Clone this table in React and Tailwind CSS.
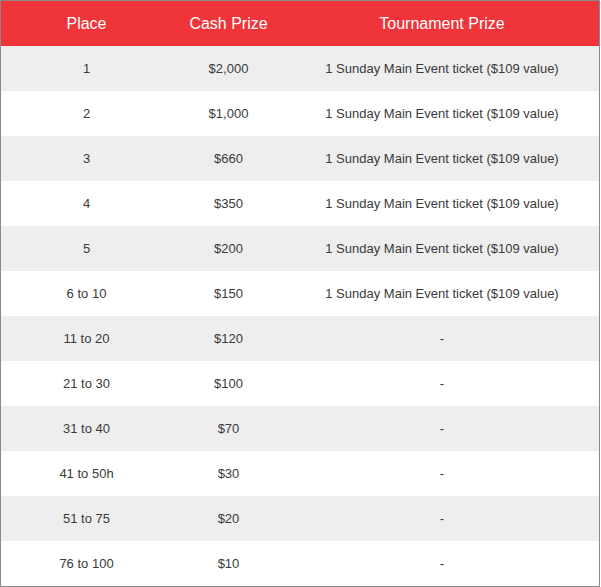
const rows = [
  ['1', '$2,000', '1 Sunday Main Event ticket ($109 value)'],
  ['2', '$1,000', '1 Sunday Main Event ticket ($109 value)'],
  ['3', '$660', '1 Sunday Main Event ticket ($109 value)'],
  ['4', '$350', '1 Sunday Main Event ticket ($109 value)'],
  ['5', '$200', '1 Sunday Main Event ticket ($109 value)'],
  ['6 to 10', '$150', '1 Sunday Main Event ticket ($109 value)'],
  ['11 to 20', '$120', '-'],
  ['21 to 30', '$100', '-'],
  ['31 to 40', '$70', '-'],
  ['41 to 50h', '$30', '-'],
  ['51 to 75', '$20', '-'],
  ['76 to 100', '$10', '-'],
];

export default function App() {
  return (
    <div className="w-[600px] bg-white font-['Liberation_Sans',Arial,sans-serif]">
      <div className="border border-[#8a8a8a]">
        <div className="grid grid-cols-[171px_113px_1fr] h-[45px] items-center bg-[#ef3539] text-white text-[16px]">
          <div className="text-center">Place</div>
          <div className="text-center">Cash Prize</div>
          <div className="text-center">Tournament Prize</div>
        </div>
        {rows.map((r, i) => (
          <div
            key={i}
            className={`grid grid-cols-[171px_113px_1fr] h-[45px] items-center text-[13px] text-[#3a3a3a] ${
              i % 2 === 0 ? 'bg-[#eeeeee]' : 'bg-white'
            }`}
          >
            <div className="text-center">{r[0]}</div>
            <div className="text-center">{r[1]}</div>
            <div className="text-center">{r[2]}</div>
          </div>
        ))}
      </div>
    </div>
  );
}
